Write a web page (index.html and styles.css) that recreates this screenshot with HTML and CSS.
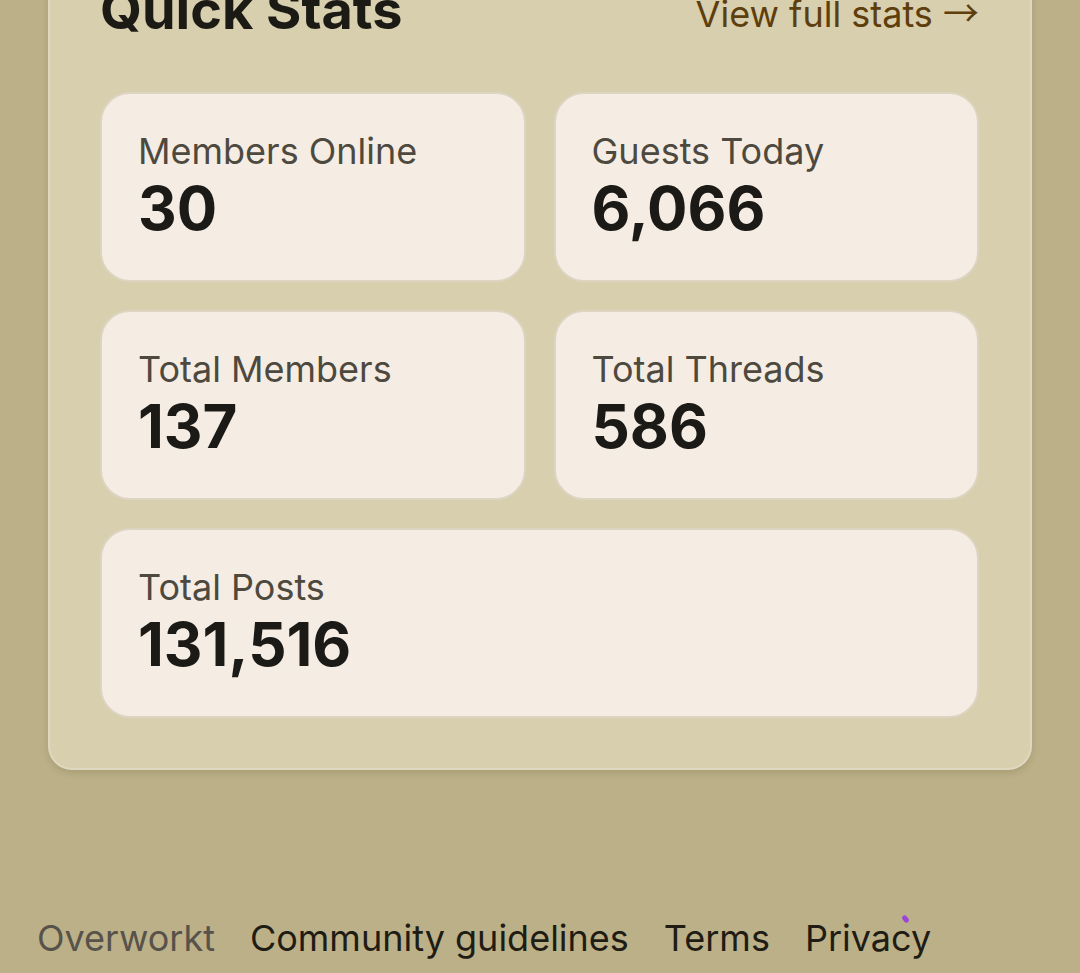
FILE: index.html
```html
<!DOCTYPE html>
<html lang="en">
<head>
<meta charset="utf-8">
<title>Quick Stats</title>
<link rel="stylesheet" href="styles.css">
</head>
<body>
<main class="page">
  <section class="stats-card">
    <header class="stats-head">
      <h2 class="stats-title">Quick Stats</h2>
      <a class="stats-link" href="#">View full stats <span class="arrow">→</span></a>
    </header>
    <div class="stats-grid">
      <div class="stat">
        <div class="stat-label">Members Online</div>
        <div class="stat-value">30</div>
      </div>
      <div class="stat">
        <div class="stat-label">Guests Today</div>
        <div class="stat-value">6,066</div>
      </div>
      <div class="stat">
        <div class="stat-label">Total Members</div>
        <div class="stat-value">137</div>
      </div>
      <div class="stat">
        <div class="stat-label">Total Threads</div>
        <div class="stat-value">586</div>
      </div>
      <div class="stat stat-wide">
        <div class="stat-label">Total Posts</div>
        <div class="stat-value">131,516</div>
      </div>
    </div>
  </section>
</main>
<footer class="footer">
  <span class="brand">Overworkt</span>
  <a class="foot-link" href="#">Community guidelines</a>
  <a class="foot-link" href="#">Terms</a>
  <a class="foot-link privacy" href="#">Privacy<span class="cursor-dot"></span></a>
</footer>
</body>
</html>
```
FILE: styles.css
```css
html, body {
  margin: 0;
  padding: 0;
}
body {
  background: #bbb088;
  font-family: Inter, "Noto Sans", sans-serif;
  color: #1c1a15;
  height: 973px;
  overflow: hidden;
}
.page {
  padding: 0 48px;
}
.stats-card {
  margin-top: -71px;
  background: #d8cfae;
  border: 2px solid #dfd8c1;
  border-radius: 24px;
  padding: 52px 51px 50px 50px;
  box-shadow: 0 3px 6px rgba(120, 105, 60, 0.25);
}
.stats-head {
  display: flex;
  justify-content: space-between;
  align-items: center;
  margin-bottom: 55px;
}
.stats-title {
  margin: 0;
  font-size: 54px;
  line-height: 1;
  font-weight: 700;
  color: #1c1a14;
}
.stats-link {
  font-size: 36px;
  line-height: 1.2;
  margin-top: 6px;
  color: #5e3e0c;
  text-decoration: none;
}
.arrow {
  font-family: "Noto Sans CJK JP", sans-serif;
}
.stats-grid {
  display: grid;
  grid-template-columns: 1fr 1fr;
  gap: 28px;
}
.stat {
  box-sizing: border-box;
  background: #f5ede4;
  border: 2px solid #ddd4c2;
  border-radius: 30px;
  height: 190px;
  padding: 36px 36px 0 36px;
}
.stat-wide {
  grid-column: 1 / span 2;
}
.stat-label {
  font-size: 36px;
  line-height: 1.2;
  color: #4e493f;
  margin-bottom: 2px;
}
.stat-value {
  font-size: 60px;
  font-weight: 700;
  line-height: 1.1;
  color: #1c1a16;
}
.footer {
  display: flex;
  gap: 35px;
  padding: 0 37px;
  margin-top: 147px;
  font-size: 36px;
  line-height: 1.2;
}
.brand {
  color: #57524a;
}
.foot-link {
  color: #1f1c14;
  text-decoration: none;
}
.privacy {
  position: relative;
}
.cursor-dot {
  position: absolute;
  left: 98px;
  top: -2px;
  width: 5px;
  height: 8px;
  border-radius: 3px;
  background: #9a45d8;
  transform: rotate(-40deg);
}
```
